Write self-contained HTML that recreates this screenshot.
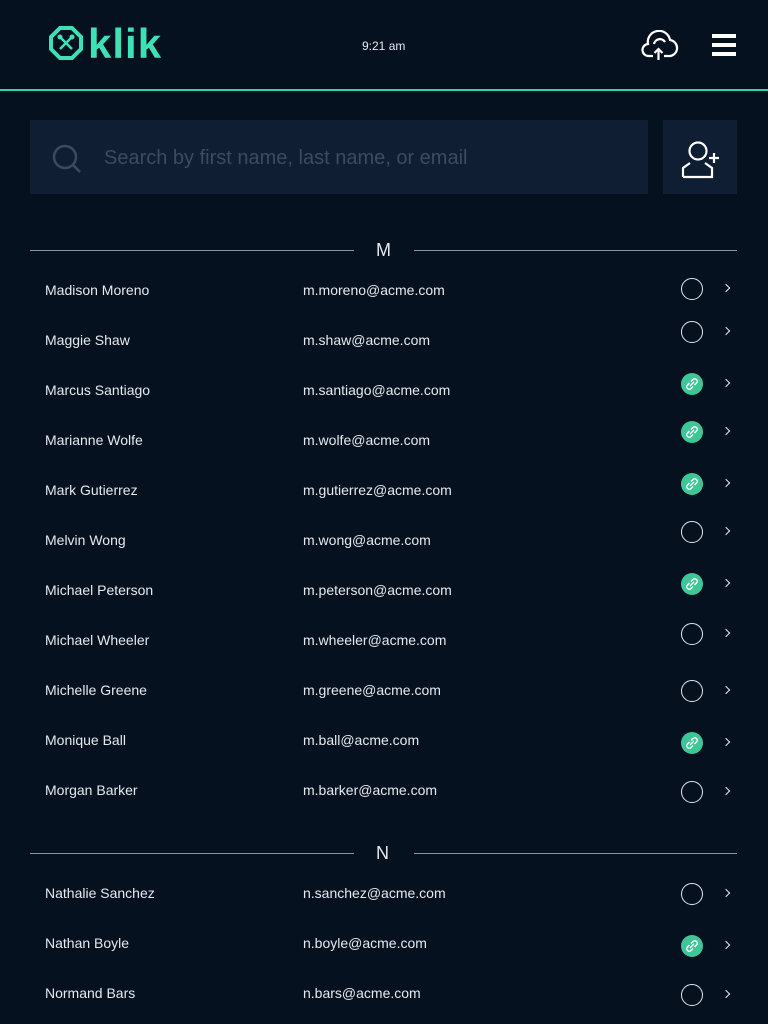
<!DOCTYPE html>
<html><head><meta charset="utf-8"><style>
body{margin:0;width:768px;height:1024px;background:#06111f;font-family:"Liberation Sans",sans-serif;color:#e6e9ee;position:relative;overflow:hidden}
.a{position:absolute}
.t{position:absolute;font-size:14px;line-height:16px;white-space:nowrap}
.line{position:absolute;height:1px;background:#8a96a3}
.circ{position:absolute;width:22px;height:22px;border:1.6px solid #e6e9ee;border-radius:50%;box-sizing:border-box}
.lk{position:absolute;width:22px;height:22px;border-radius:50%;background:#3fc697}
.chev{position:absolute;width:5px;height:5px;border-top:1.8px solid #e6e9ee;border-right:1.8px solid #e6e9ee;transform:rotate(45deg)}
</style></head><body>
<svg class="a" style="left:49px;top:26px" width="34" height="34" viewBox="0 0 34 34">
<path d="M11 2H23L32 11V23L23 32H11L2 23V11Z" fill="none" stroke="#3ee0b6" stroke-width="4" stroke-linejoin="miter"/>
<path d="M11 11L23 23M23 11L11 23" stroke="#3ee0b6" stroke-width="2.5"/>
<circle cx="11" cy="11" r="2.5" fill="#3ee0b6"/><circle cx="23" cy="11" r="2.5" fill="#3ee0b6"/>
</svg>
<div class="a" style="left:88px;top:20px;font-size:42px;font-weight:bold;color:#3ee0b6;line-height:48px;letter-spacing:1px">klik</div>
<div class="t" style="left:362px;top:38px;font-size:12px">9:21 am</div>
<svg class="a" style="left:641px;top:30px" width="38" height="30" viewBox="0 0 38 30">
<path d="M12 26H8A6 6 0 0 1 7 14A11 11 0 0 1 29 10A8 8 0 0 1 27 26H23" fill="none" stroke="#fff" stroke-width="2.2"/>
<path d="M13 14A6 6 0 0 1 24 12" fill="none" stroke="#fff" stroke-width="2.2"/>
<path d="M17.5 30V19M13.5 23L17.5 19L21.5 23" fill="none" stroke="#fff" stroke-width="2.2"/>
</svg>
<div class="a" style="left:712px;top:34px;width:24px;height:4px;background:#fff"></div>
<div class="a" style="left:712px;top:43px;width:24px;height:4px;background:#fff"></div>
<div class="a" style="left:712px;top:52px;width:24px;height:4px;background:#fff"></div>
<div class="a" style="left:0;top:89px;width:768px;height:2px;background:#2fd3a4"></div>
<div class="a" style="left:30px;top:120px;width:618px;height:74px;background:#0f1e33"></div>
<svg class="a" style="left:51px;top:143px" width="32" height="32" viewBox="0 0 32 32"><circle cx="14" cy="14" r="11" fill="none" stroke="#3c4a5c" stroke-width="2.5"/><path d="M22 22L29 29" stroke="#3c4a5c" stroke-width="2.5"/></svg>
<div class="t" style="left:104px;top:146px;font-size:20px;line-height:24px;color:#3d4b5e">Search by first name, last name, or email</div>
<div class="a" style="left:663px;top:120px;width:74px;height:74px;background:#0f1e33"></div>
<svg class="a" style="left:678px;top:135px" width="46" height="46" viewBox="0 0 46 46"><circle cx="20" cy="16" r="8.5" fill="none" stroke="#fff" stroke-width="2.2"/><path d="M5 42V33L12 28M27 28L34 33V42H5" fill="none" stroke="#fff" stroke-width="2.2"/><path d="M31 23H41M36 18V28" stroke="#fff" stroke-width="2.2"/></svg>
<div class="line" style="left:30px;top:250px;width:324px"></div><div class="line" style="left:414px;top:250px;width:323px"></div>
<div class="t" style="left:376px;top:240px;font-size:18px;line-height:20px">M</div>
<div class="line" style="left:30px;top:853px;width:324px"></div><div class="line" style="left:414px;top:853px;width:323px"></div>
<div class="t" style="left:376px;top:843px;font-size:18px;line-height:20px">N</div>
<div id="rows"></div>
<script>
var d=[["Madison Moreno","m.moreno",290,289,0],["Maggie Shaw","m.shaw",340,332,0],["Marcus Santiago","m.santiago",390,384,1],["Marianne Wolfe","m.wolfe",440,432,1],["Mark Gutierrez","m.gutierrez",490,484,1],["Melvin Wong","m.wong",540,532,0],["Michael Peterson","m.peterson",590,584,1],["Michael Wheeler","m.wheeler",640,634,0],["Michelle Greene","m.greene",690,691,0],["Monique Ball","m.ball",740,743,1],["Morgan Barker","m.barker",790,792,0],["Nathalie Sanchez","n.sanchez",893,894,0],["Nathan Boyle","n.boyle",943,946,1],["Normand Bars","n.bars",993,995,0]];
var h="";d.forEach(function(r){var y=r[2]-8,c=r[3];
h+='<div class="t" style="left:45px;top:'+y+'px">'+r[0]+'</div><div class="t" style="left:303px;top:'+y+'px">'+r[1]+'@acme.com</div>';
if(r[4])h+='<div class="lk" style="left:681px;top:'+(c-11)+'px"><svg width="22" height="22" viewBox="0 0 22 22"><path d="M10 8.5L12 6.5A2.2 2.2 0 0 1 15.5 10L13.5 12M12 13.5L10 15.5A2.2 2.2 0 0 1 6.5 12L8.5 10M9 13L13 9" fill="none" stroke="#fff" stroke-width="1.4"/></svg></div>';
else h+='<div class="circ" style="left:681px;top:'+(c-11)+'px"></div>';
h+='<div class="chev" style="left:723px;top:'+(c-4)+'px"></div>';});
document.getElementById("rows").innerHTML=h;
</script>
</body></html>
